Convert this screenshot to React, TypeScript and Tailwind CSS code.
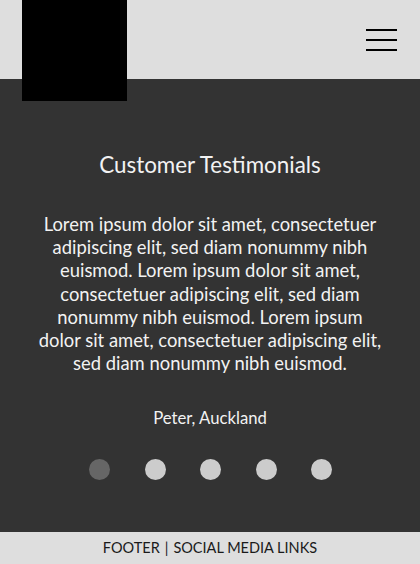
import React from 'react';

const lines = [
  'Lorem ipsum dolor sit amet, consectetuer',
  'adipiscing elit, sed diam nonummy nibh',
  'euismod. Lorem ipsum dolor sit amet,',
  'consectetuer adipiscing elit, sed diam',
  'nonummy nibh euismod. Lorem ipsum',
  'dolor sit amet, consectetuer adipiscing elit,',
  'sed diam nonummy nibh euismod.',
];

export default function App() {
  const dots = [0, 1, 2, 3, 4];
  return (
    <div className="w-[420px] h-[564px] flex flex-col font-['Lato',sans-serif]">
      {/* Header */}
      <header className="h-[79px] shrink-0 bg-[#dedede] flex items-start justify-between pl-[22px] pr-[23px]">
        <div className="relative z-10 w-[105px] h-[101px] bg-black" />
        <button className="mt-[29px] w-[31px] flex flex-col gap-[8px]" aria-label="Menu">
          <span className="block h-[2px] bg-black" />
          <span className="block h-[2px] bg-black" />
          <span className="block h-[2px] bg-black" />
        </button>
      </header>

      {/* Testimonials */}
      <main className="flex-1 bg-[#333333] flex flex-col items-center pt-[72px] text-[#f2f2f2]">
        <h2 className="text-[22.4px] leading-[28px]">Customer Testimonials</h2>
        <p className="mt-[34px] text-[18.4px] leading-[23.2px] text-center whitespace-nowrap">
          {lines.map((l, i) => (
            <span key={i} className="block">{l}</span>
          ))}
        </p>
        <div className="mt-[32px] text-[16.7px] leading-[22px]">Peter, Auckland</div>
        <div className="mt-[30px] ml-[1px] flex gap-[34.5px]">
          {dots.map((d) => (
            <span
              key={d}
              className={`w-[21px] h-[21px] rounded-full ${d === 0 ? 'bg-[#666666]' : 'bg-[#cccccc]'}`}
            />
          ))}
        </div>
      </main>

      {/* Footer */}
      <footer className="h-[32px] shrink-0 bg-[#dedede] flex items-center justify-center gap-[5px] text-[14.5px] text-[#1a1a1a]">
        <span>FOOTER</span>
        <span>|</span>
        <span>SOCIAL MEDIA LINKS</span>
      </footer>
    </div>
  );
}
